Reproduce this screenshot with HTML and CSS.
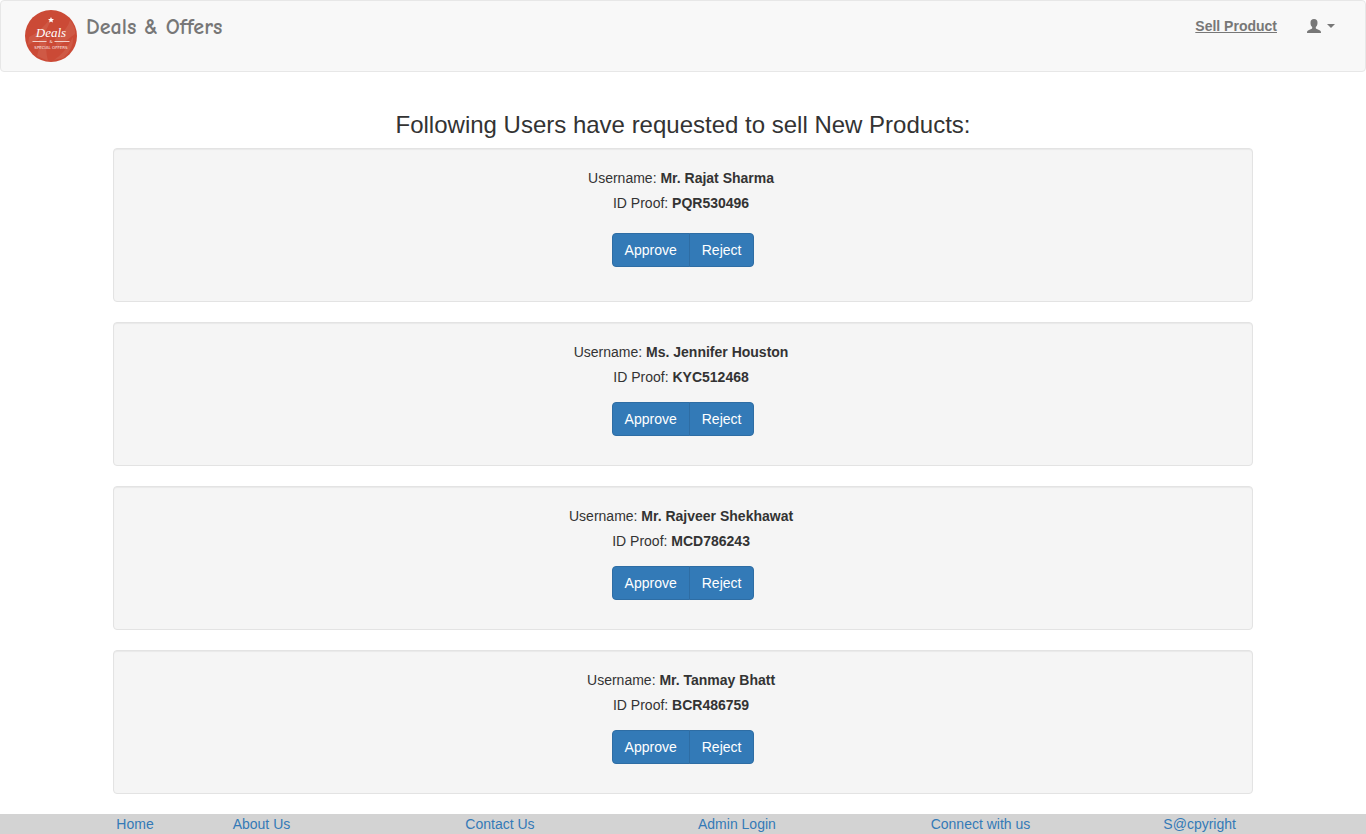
FILE: index.html
```html
<!DOCTYPE html>
<html lang="en">
<head>
<meta charset="utf-8">
<meta name="viewport" content="width=device-width, initial-scale=1">
<title>Deals &amp; Offers</title>
<link rel="stylesheet" href="styles.css">
</head>
<body>
<header class="navbar">
  <a class="brand" href="#">
    <svg class="brand-logo" viewBox="0 0 52 52" aria-hidden="true">
      <circle cx="26" cy="26" r="26" fill="#cb4a36"/>
      <path d="M4 27Q14 23 26 8Q24 18 15 28Q9 32 3 35ZM12 46Q15 36 14 30L22 28Q20 40 23 51ZM29 50Q40 43 48 27Q49 39 38 48ZM30 29Q43 19 45 10Q51 18 50 24Q42 30 32 37Z" fill="#d0604b" opacity=".7"/>
      <path d="M26 7l.9 1.900 2.100.2-1.600 1.400.5 2.100-1.900-1.100-1.900 1.100.5-2.100-1.600-1.400 2.100-.2z" fill="#fff"/>
      <path d="M7.500 31.500h14M29.500 31.500h15" stroke="#f3cfc8" stroke-width="1"/>
      <text class="logo-script" x="26" y="27" text-anchor="middle">Deals</text>
      <text class="logo-caps" x="26" y="33" text-anchor="middle">&amp;</text>
      <text class="logo-caps" x="26" y="39" text-anchor="middle">SPECIAL OFFERS</text>
    </svg>
    <span class="brand-name">Deals &amp; Offers</span>
  </a>
  <nav class="nav-links">
    <a class="sell-link" href="#">Sell Product</a>
    <button class="user-menu" type="button" aria-label="Account">
      <svg class="user-icon" viewBox="0 0 14 14" aria-hidden="true"><path d="M7 0C4.700 0 3.500 1.300 3.500 3.700C3.500 5.700 4.200 7.300 5.200 8V9.300C5 10 3.500 10.300 2 11C.5 11.700 0 12 0 14H14C14 12 13.500 11.700 12 11C10.500 10.300 9 10 8.800 9.300V8C9.800 7.300 10.500 5.700 10.500 3.700C10.500 1.300 9.300 0 7 0Z" fill="currentColor"/></svg>
      <span class="caret"></span>
    </button>
  </nav>
</header>

<main class="container">
  <h3 class="page-title">Following Users have requested to sell New Products:</h3>
  <section class="card card-first">
    <p class="field">Username: <b>Mr. Rajat Sharma</b>&nbsp;</p>
    <p class="field">ID Proof: <b>PQR530496</b>&nbsp;</p>
    <div class="actions"><button class="btn" type="button">Approve</button><button class="btn" type="button">Reject</button></div>
  </section>
  <section class="card">
    <p class="field">Username: <b>Ms. Jennifer Houston</b>&nbsp;</p>
    <p class="field">ID Proof: <b>KYC512468</b>&nbsp;</p>
    <div class="actions"><button class="btn" type="button">Approve</button><button class="btn" type="button">Reject</button></div>
  </section>
  <section class="card">
    <p class="field">Username: <b>Mr. Rajveer Shekhawat</b>&nbsp;</p>
    <p class="field">ID Proof: <b>MCD786243</b>&nbsp;</p>
    <div class="actions"><button class="btn" type="button">Approve</button><button class="btn" type="button">Reject</button></div>
  </section>
  <section class="card">
    <p class="field">Username: <b>Mr. Tanmay Bhatt</b>&nbsp;</p>
    <p class="field">ID Proof: <b>BCR486759</b>&nbsp;</p>
    <div class="actions"><button class="btn" type="button">Approve</button><button class="btn" type="button">Reject</button></div>
  </section>
</main>

<footer class="footer">
  <div class="footer-row">
    <a class="footer-home" href="#">Home</a>
    <a class="footer-link" href="#">About Us</a>
    <a class="footer-link" href="#">Contact Us</a>
    <a class="footer-link" href="#">Admin Login</a>
    <a class="footer-link" href="#">Connect with us</a>
    <a class="footer-link" href="#">S@cpyright</a>
  </div>
</footer>
</body>
</html>
```
FILE: styles.css
```css
* { box-sizing: border-box; }

body {
  margin: 0;
  font-family: "Liberation Sans", Arial, sans-serif;
  font-size: 14px;
  line-height: 20px;
  color: #333;
  background: #fff;
}

a { color: #337ab7; text-decoration: none; }

.navbar {
  display: flex;
  justify-content: space-between;
  align-items: flex-start;
  padding: 9px 30px 9px 24px;
  margin-bottom: 20px;
  border: 1px solid #e7e7e7;
  border-radius: 4px;
  background: #f8f8f8;
}

.brand { display: flex; gap: 9px; color: #777; }
.brand-logo { display: block; width: 52px; height: 52px; }
.brand-name {
  padding-top: 7px;
  font-family: "Comic Sans MS", "Comic Neue", "Open Sans", sans-serif;
  font-size: 22px;
  font-weight: 700;
}
.logo-script {
  font-family: "Liberation Serif", serif;
  font-size: 13px;
  font-style: italic;
  fill: #fff;
}
.logo-caps {
  font-family: "DejaVu Sans", sans-serif;
  font-size: 4px;
  fill: #fbe6e2;
}

.nav-links { display: flex; align-items: center; gap: 30px; padding-top: 6px; }
.sell-link { font-weight: 700; color: #777; text-decoration: underline; }
.user-menu {
  display: flex;
  align-items: center;
  gap: 6px;
  padding: 0;
  border: 0;
  color: #777;
  background: none;
}
.user-icon { display: block; width: 14px; height: 14px; }
.caret {
  border-top: 4px solid;
  border-right: 4px solid transparent;
  border-left: 4px solid transparent;
}

.container { max-width: 1170px; margin: 0 auto; padding: 0 15px; }
.page-title {
  margin: 40px 0 10px;
  font-size: 24px;
  font-weight: 400;
  line-height: 26px;
  text-align: center;
}

.card {
  padding: 19px;
  margin-bottom: 20px;
  border: 1px solid #e3e3e3;
  border-radius: 4px;
  background: #f5f5f5;
  box-shadow: inset 0 1px 1px rgba(0, 0, 0, 0.05);
  text-align: center;
}
.field { margin: 0 0 5px; }
.actions { display: flex; justify-content: center; padding: 10px 0; }
.card-first .actions { padding: 15px 0; }

.btn {
  padding: 6px 12px;
  border: 1px solid #2e6da4;
  border-radius: 4px;
  font: inherit;
  color: #fff;
  background: #337ab7;
}
.btn:first-child { border-top-right-radius: 0; border-bottom-right-radius: 0; }
.btn + .btn { margin-left: -1px; border-top-left-radius: 0; border-bottom-left-radius: 0; }

.footer { overflow: hidden; background: #d3d3d3; }
.footer-row {
  display: grid;
  grid-template-columns: repeat(12, 1fr);
  margin-right: -30px;
}
.footer-home { grid-column: 2; }
.footer-link { grid-column: span 2; }
```
